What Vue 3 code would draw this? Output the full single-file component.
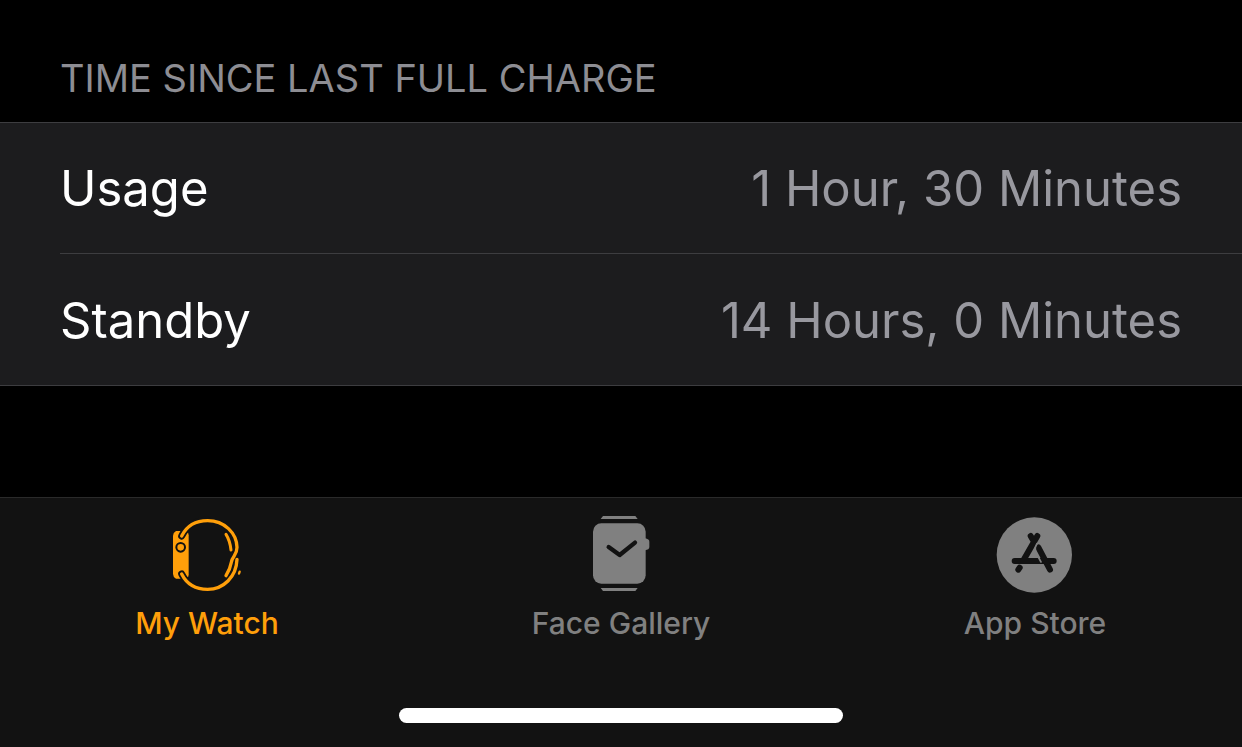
<script setup>
import { ref } from 'vue'

const rows = [
  { label: 'Usage', value: '1 Hour, 30 Minutes' },
  { label: 'Standby', value: '14 Hours, 0 Minutes' },
]
const tabs = [
  { id: 'watch', label: 'My Watch' },
  { id: 'gallery', label: 'Face Gallery' },
  { id: 'store', label: 'App Store' },
]
const active = ref('watch')
</script>

<template>
  <div class="screen">
    <main class="content">
      <h2 class="heading">TIME SINCE LAST FULL CHARGE</h2>
      <dl class="list">
        <div v-for="row in rows" :key="row.label" class="row">
          <dt>{{ row.label }}</dt>
          <dd>{{ row.value }}</dd>
        </div>
      </dl>
    </main>

    <footer class="bar">
      <nav class="tabs">
        <button
          v-for="tab in tabs"
          :key="tab.id"
          type="button"
          class="tab"
          :class="{ active: active === tab.id }"
          @click="active = tab.id"
        >
          <svg v-if="tab.id === 'watch'" class="icon" viewBox="-3 0 288 288" aria-hidden="true">
            <path class="fill" d="M48 78H79Q86 81 86 91V209Q86 218 79 221H48Q39 216 39 207V92Q39 83 48 78Z" />
            <g class="cut">
              <path stroke-width="21" d="M65 93C79 65 106 46 143 46" />
              <path stroke-width="21" d="M65 207C79 235 106 253 143 253" />
              <circle cx="62" cy="127" r="13" stroke-width="6" />
            </g>
            <g class="line">
              <path stroke-width="10" d="M65 93C79 65 106 47 143 47C193 47 230 84 231 127C231 153 217 152 214 172C211 190 205 201 198 212" />
              <path stroke-width="10" d="M65 207C79 235 106 253 143 253C190 253 229 216 231 163" />
              <path stroke-width="9" d="M198 88C207 102 211 117 213 135" />
              <path stroke-width="7" d="M239 200L237 206" />
            </g>
          </svg>
          <svg v-else-if="tab.id === 'gallery'" class="icon" viewBox="-6 0 288 288" aria-hidden="true">
            <path class="fill" d="M84 33H181L188 42H77ZM77 249H188L181 258H84Z" />
            <rect class="fill" x="54" y="55" width="158" height="181" rx="25" />
            <path class="fill" d="M210 100Q223 102 223 110V126Q223 134 210 136Z" />
            <path class="cut" stroke-width="13" d="M101 126L134 150L180 113" />
          </svg>
          <svg v-else class="icon" viewBox="6 0 288 288" aria-hidden="true">
            <circle class="fill" cx="148" cy="150" r="113" />
            <g class="cut">
              <path stroke-width="18" d="M157 93L117 163M104 188L100 194M89 168H206M137 93L147 110" />
              <path stroke-width="18" d="M160 127L195 194" />
            </g>
            <path class="gap" d="M156 116L151 127Q149 138 155 147L168 171" />
          </svg>
          <span class="label">{{ tab.label }}</span>
        </button>
      </nav>
      <div class="home"></div>
    </footer>
  </div>
</template>

<style>
body {
  margin: 0;
  background: #000;
}
</style>

<style scoped>
.screen {
  display: flex;
  flex-direction: column;
  min-height: 100vh;
  background: #000;
  font-family: Inter, "Liberation Sans", sans-serif;
}
.content {
  flex: 1;
}
.heading {
  margin: 0;
  padding: 54px 60px 20px;
  color: #8d8d93;
  font-size: 38px;
  font-weight: 400;
  line-height: 48px;
}
.list {
  margin: 0;
  padding-left: 60px;
  background: #1c1c1e;
  border-top: 1px solid #3d3d40;
  border-bottom: 1px solid #3d3d40;
}
.row {
  display: flex;
  box-sizing: border-box;
  align-items: center;
  justify-content: space-between;
  min-height: 131px;
  padding: 36px 60px 34px 0;
  font-size: 49px;
  line-height: 60px;
}
.row:not(:last-child) {
  border-bottom: 1px solid #3d3d40;
}
dt {
  color: #fff;
}
dd {
  margin: 0;
  color: #98989f;
}
.bar {
  display: flex;
  flex-direction: column;
  align-items: center;
  padding-bottom: 24px;
  background: #121212;
  border-top: 1px solid #2a2a2a;
}
.tabs {
  display: flex;
  width: 100%;
}
.tab {
  display: flex;
  flex: 1;
  flex-direction: column;
  align-items: center;
  gap: 4px;
  margin: 0;
  padding: 7px 0 0;
  border: 0;
  background: none;
  color: #808080;
  font-family: inherit;
  cursor: pointer;
}
.tab.active {
  color: #ff9f0a;
}
.icon {
  width: 96px;
  height: 96px;
}
.fill {
  fill: currentColor;
}
.line,
.cut,
.gap {
  fill: none;
  stroke: currentColor;
  stroke-linecap: round;
  stroke-linejoin: round;
}
.cut {
  stroke: #121212;
}
.gap {
  stroke-width: 5px;
}
.label {
  font-size: 30px;
  font-weight: 500;
  line-height: 36px;
}
.home {
  width: 444px;
  max-width: 60%;
  height: 15px;
  margin-top: 67px;
  border-radius: 8px;
  background: #fff;
}
</style>
